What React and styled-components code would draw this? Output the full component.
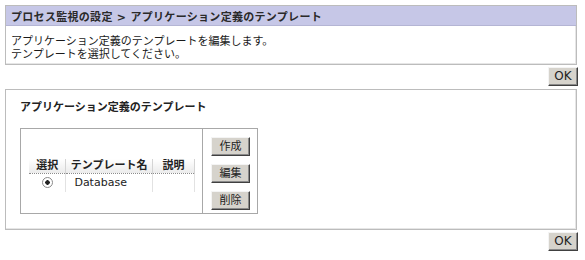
import styled, { createGlobalStyle } from 'styled-components';

const GlobalStyle = createGlobalStyle`
    body {
        margin: 0;
        background: #ffffff;
        font-family: "DejaVu Sans", "Noto Sans CJK JP", sans-serif;
        font-size: 11px;
        color: #1a1a1a;
    }
`;

const Page = styled.div`
    width: 572px;
    padding: 5px 0 0 5px;
    display: flex;
    flex-direction: column;
`;

const Panel = styled.section`
    border: 1px solid #bcbcbc;
    box-shadow: inset -1px -1px 0 #e6e6e6;
    background: #fff;
`;

const TitleBar = styled.div`
    height: 19px;
    background: #c6c7e7;
    border-bottom: 1px solid #b4b5d4;
    padding: 0 5px;
    display: flex;
    align-items: center;
    font-weight: bold;
    font-size: 11px;
    color: #2a2a2a;
    letter-spacing: 0.3px;
`;

const Desc = styled.div`
    padding: 9px 5px 3px;
    line-height: 13px;
`;

const ButtonRow = styled.div`
    display: flex;
    justify-content: flex-end;
    padding: 2px 0 3px;
    margin-right: -1px;
`;

const Button = styled.button`
    font-family: "DejaVu Sans", "Noto Sans CJK JP", sans-serif;
    font-size: ${p => (p.$wide ? '11px' : '12px')};
    height: 19px;
    min-width: ${p => (p.$wide ? '39px' : '30px')};
    padding: 0 4px;
    background: #d6d3cc;
    color: #222;
    border: 1px solid;
    border-color: #f4f4f4 #404040 #404040 #f4f4f4;
    box-shadow: inset -1px -1px 0 #8a8a8a;
    line-height: 15px;
    cursor: pointer;
`;

const Body = styled.div`
    padding: 11px 14px 15px;
`;

const Heading = styled.h2`
    margin: 0 0 14px;
    font-size: 11px;
    line-height: 13px;
    font-weight: bold;
    color: #222;
`;

const Box = styled.div`
    display: flex;
    width: 236px;
    height: 84px;
    border: 1px solid #a8a8a8;
`;

const ListArea = styled.div`
    display: flex;
    align-items: center;
    padding: 8px 7px 0 8px;
    border-right: 1px solid #a8a8a8;
`;

const Table = styled.table`
    border-collapse: collapse;
    font-size: 11px;
`;

const Th = styled.th`
    width: ${p => p.$w}px;
    height: 14px;
    padding: 0;
    font-weight: bold;
    text-align: center;
    line-height: 13px;
    background: linear-gradient(#ffffff, #ebebeb);
    border-bottom: 1px dotted #8c8c8c;
    border-right: 1px solid #d4d4d4;
    color: #222;
`;

const Td = styled.td`
    height: 18px;
    padding: 0 0 0 ${p => (p.$center ? 0 : 8)}px;
    text-align: ${p => (p.$center ? 'center' : 'left')};
    border-right: 1px solid #e2e2e2;
    line-height: 16px;
    color: #222;
`;

const Radio = styled.span`
    display: inline-block;
    width: 9px;
    height: 9px;
    border-radius: 50%;
    border: 1px solid #8a8a8a;
    background: radial-gradient(circle, #222 0 2px, #fff 2.5px);
    vertical-align: middle;
`;

const ActionColumn = styled.div`
    display: flex;
    flex-direction: column;
    gap: 8px;
    padding: 8px 7px 0 8px;
`;

export default function App() {
    return (
        <>
            <GlobalStyle />
            <Page>
                <Panel>
                    <TitleBar>プロセス監視の設定 &gt; アプリケーション定義のテンプレート</TitleBar>
                    <Desc>
                        アプリケーション定義のテンプレートを編集します。
                        <br />
                        テンプレートを選択してください。
                    </Desc>
                </Panel>
                <ButtonRow>
                    <Button>OK</Button>
                </ButtonRow>
                <Panel>
                    <Body>
                        <Heading>アプリケーション定義のテンプレート</Heading>
                        <Box>
                            <ListArea>
                                <Table>
                                    <thead>
                                        <tr>
                                            <Th $w={38}>選択</Th>
                                            <Th $w={87}>テンプレート名</Th>
                                            <Th $w={43}>説明</Th>
                                        </tr>
                                    </thead>
                                    <tbody>
                                        <tr>
                                            <Td $center><Radio /></Td>
                                            <Td>Database</Td>
                                            <Td></Td>
                                        </tr>
                                    </tbody>
                                </Table>
                            </ListArea>
                            <ActionColumn>
                                <Button $wide>作成</Button>
                                <Button $wide>編集</Button>
                                <Button $wide>削除</Button>
                            </ActionColumn>
                        </Box>
                    </Body>
                </Panel>
                <ButtonRow>
                    <Button>OK</Button>
                </ButtonRow>
            </Page>
        </>
    );
}
